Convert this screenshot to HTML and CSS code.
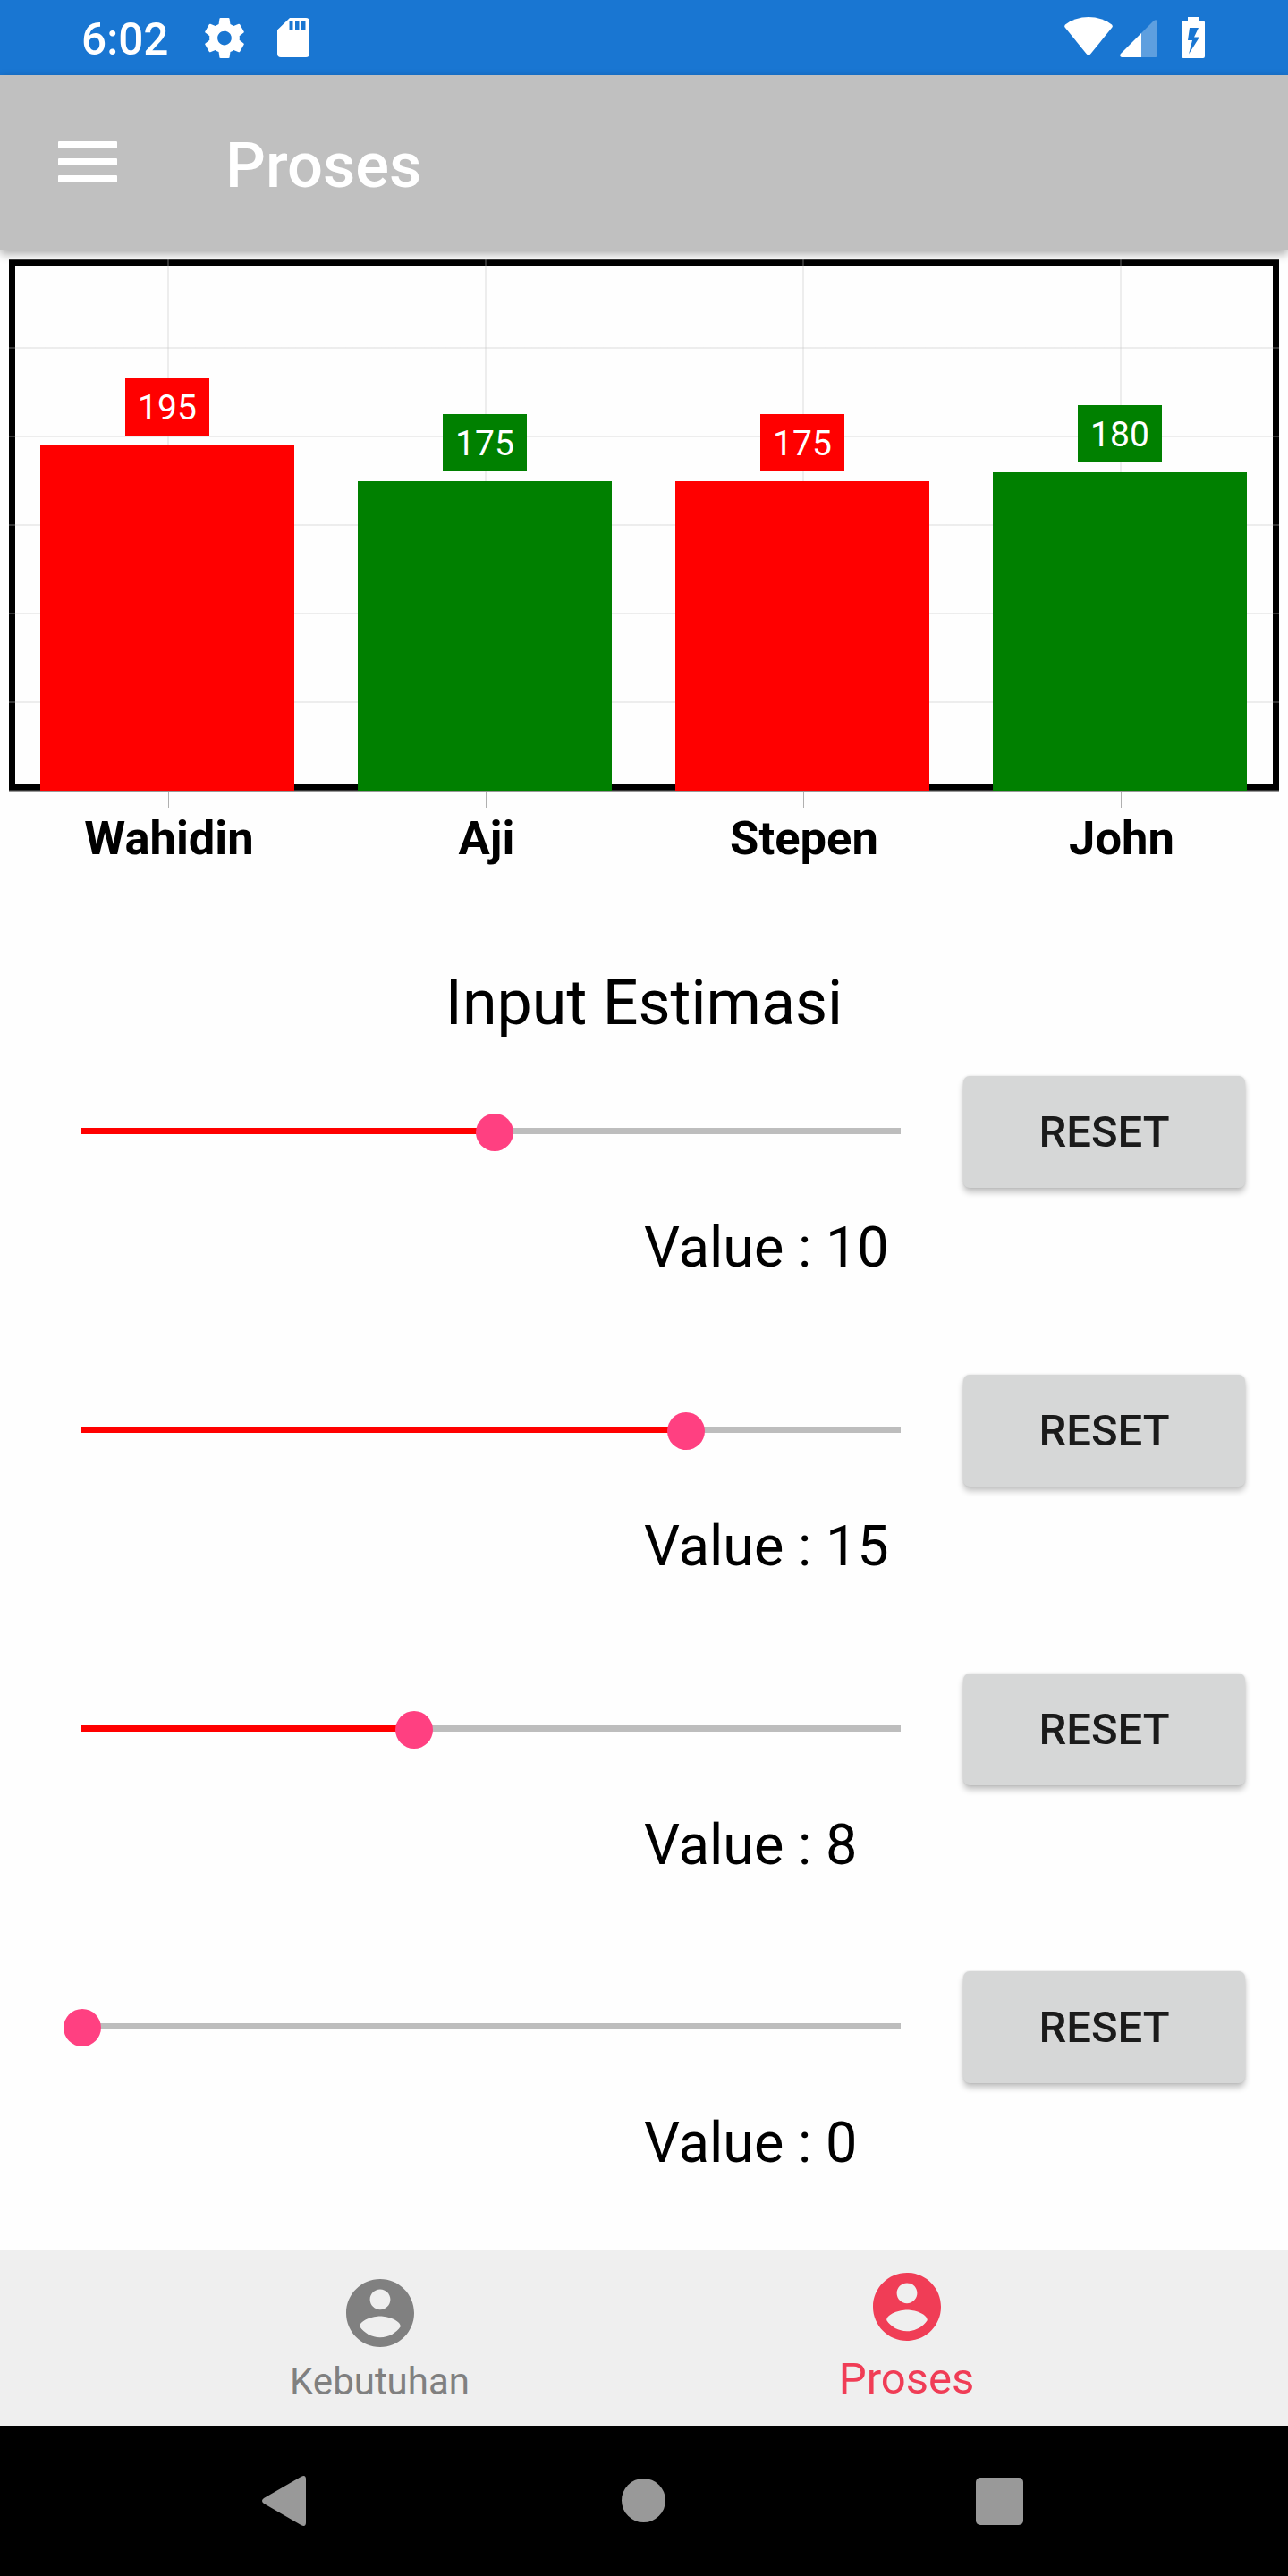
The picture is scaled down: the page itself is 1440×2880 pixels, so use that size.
FILE: index.html
```html
<!DOCTYPE html>
<html lang="id">
<head>
<meta charset="utf-8">
<title>Proses</title>
<link rel="stylesheet" href="styles.css">
</head>
<body>
<div class="screen">
  <header class="status">
    <span class="clock">6:02</span>
    <svg class="gear" viewBox="2.2 2 19.6 20" preserveAspectRatio="none"><path d="M19.43 12.98c.04-.32.07-.64.07-.98s-.03-.66-.07-.98l2.11-1.65c.19-.15.24-.42.12-.64l-2-3.46c-.12-.22-.39-.3-.61-.22l-2.49 1c-.52-.4-1.08-.73-1.69-.98l-.38-2.65C14.46 2.18 14.25 2 14 2h-4c-.25 0-.46.18-.49.42l-.38 2.65c-.61.25-1.17.59-1.69.98l-2.49-1c-.23-.09-.49 0-.61.22l-2 3.46c-.13.22-.07.49.12.64l2.11 1.65c-.04.32-.07.65-.07.98s.03.66.07.98l-2.11 1.65c-.19.15-.24.42-.12.64l2 3.46c.12.22.39.3.61.22l2.49-1c.52.4 1.08.73 1.69.98l.38 2.65c.03.24.24.42.49.42h4c.25 0 .46-.18.49-.42l.38-2.65c.61-.25 1.17-.59 1.69-.98l2.49 1c.23.09.49 0 .61-.22l2-3.46c.12-.22.07-.49-.12-.64l-2.11-1.65zM12 15.5c-1.93 0-3.5-1.57-3.5-3.5s1.57-3.5 3.5-3.5 3.5 1.57 3.5 3.5-1.57 3.5-3.5 3.5z"/></svg>
    <svg class="sd" viewBox="0 0 36 44"><path fill-rule="evenodd" d="M14 0H32Q36 0 36 4V40Q36 44 32 44H4Q0 44 0 40V13.500ZM13.500 4V14H17.500V4ZM20 4V14H24.500V4ZM27 4V14H31.500V4Z"/></svg>
    <span class="fill"></span>
    <svg class="wifi" viewBox="0 0 54 43"><path d="M1 8.500Q12 0 27 0T53 8.500Q54.500 10 53 12L29.500 41Q27 44 24.500 41L1 12Q-.5 10 1 8.500Z"/></svg>
    <svg class="signal" viewBox="0 0 42 42"><path opacity=".3" d="M38 1Q42-1 42 3V40Q42 42 40 42H24V15Z"/><path d="M24 15V42H2Q-1 41 1 38Z"/></svg>
    <svg class="battery" viewBox="0 0 26 46"><path fill-rule="evenodd" d="M7 0H19V4H24Q26 4 26 6V44Q26 46 24 46H2Q0 46 0 44V6Q0 4 2 4H7ZM9 12 7 26H12L8 41.500 20 22.500H14L19 12Z"/></svg>
  </header>

  <header class="appbar">
    <span class="menu"><i></i><i></i><i></i></span>
    <h1>Proses</h1>
  </header>

  <section class="chart">
    <div class="plot">
      <div class="col red"><b>195</b><div class="bar" style="height:386px"></div></div>
      <div class="col green"><b>175</b><div class="bar" style="height:346px"></div></div>
      <div class="col red"><b>175</b><div class="bar" style="height:346px"></div></div>
      <div class="col green"><b>180</b><div class="bar" style="height:356px"></div></div>
    </div>
    <div class="axis"><span>Wahidin</span><span>Aji</span><span>Stepen</span><span>John</span></div>
  </section>

  <main class="inputs">
    <h2>Input Estimasi</h2>
    <div class="row">
      <div class="slider"><div class="done" style="width:461.5px"></div><div class="knob"></div></div>
      <button class="reset">RESET</button>
      <p class="value">Value : 10</p>
    </div>
    <div class="row">
      <div class="slider"><div class="done" style="width:675.5px"></div><div class="knob"></div></div>
      <button class="reset">RESET</button>
      <p class="value">Value : 15</p>
    </div>
    <div class="row short">
      <div class="slider"><div class="done" style="width:371.5px"></div><div class="knob"></div></div>
      <button class="reset">RESET</button>
      <p class="value">Value : 8</p>
    </div>
    <div class="row">
      <div class="slider"><div class="done" style="width:0.5px"></div><div class="knob"></div></div>
      <button class="reset">RESET</button>
      <p class="value">Value : 0</p>
    </div>
  </main>

  <nav class="tabs">
    <a class="tab">
      <svg viewBox="2 2 20 20"><path d="M12 2C6.480 2 2 6.480 2 12s4.480 10 10 10 10-4.480 10-10S17.520 2 12 2zm0 3c1.660 0 3 1.340 3 3s-1.340 3-3 3-3-1.340-3-3 1.340-3 3-3zm0 14.200c-2.500 0-4.710-1.280-6-3.220.03-1.990 4-3.080 6-3.080 1.990 0 5.970 1.090 6 3.080-1.290 1.940-3.500 3.220-6 3.220z"/></svg>
      <span>Kebutuhan</span>
    </a>
    <a class="tab active">
      <svg viewBox="2 2 20 20"><path d="M12 2C6.480 2 2 6.480 2 12s4.480 10 10 10 10-4.480 10-10S17.520 2 12 2zm0 3c1.660 0 3 1.340 3 3s-1.340 3-3 3-3-1.340-3-3 1.340-3 3-3zm0 14.200c-2.500 0-4.710-1.280-6-3.220.03-1.990 4-3.080 6-3.080 1.990 0 5.970 1.090 6 3.080-1.290 1.940-3.500 3.220-6 3.220z"/></svg>
      <span>Proses</span>
    </a>
  </nav>

  <footer class="sysnav">
    <svg class="back" viewBox="0 0 49 56"><path d="M43.500 1Q49-2 49 4V52Q49 58 43.500 55L2 31Q-2 28 2 25Z"/></svg>
    <span class="home"></span>
    <span class="recent"></span>
  </footer>
</div>
</body>
</html>
```
FILE: styles.css
```css
* { box-sizing: border-box; }
body { margin: 0; background: #fefefe; font-family: Roboto, "Liberation Sans", sans-serif; color: #000; }
h1, h2, p { margin: 0; }
svg { display: block; flex: none; }
.screen { width: 1440px; height: 2880px; display: flex; flex-direction: column; overflow: hidden; }

.status { height: 84px; background: #1976d2; display: flex; align-items: flex-start; padding: 19px 93px 0 91px; flex: none; }
.status svg { fill: #fff; }
.clock { width: 138px; font-size: 49.5px; line-height: 50px; font-weight: 500; color: #fff; }
.gear { width: 44px; height: 45px; margin-top: 1px; }
.sd { width: 36px; height: 44px; margin: 1px 0 0 37px; }
.fill { flex: 1; }
.wifi { width: 54px; height: 43px; }
.signal { width: 42px; height: 42px; margin: 3px 0 0 8px; }
.battery { width: 26px; height: 46px; margin-left: 27px; }

.appbar { height: 196px; background: #c0c0c0; display: flex; align-items: center; padding-left: 65px; flex: none; box-shadow: 0 4px 10px rgba(0,0,0,.33); }
.menu { width: 66px; display: flex; flex-direction: column; gap: 11px; margin: -3px 121px 0 0; }
.menu i { height: 8px; background: #fff; border-radius: 1px; }
h1 { font-size: 70.5px; line-height: 82px; font-weight: 500; color: #fff; margin-top: 6px; }

.chart { padding: 10px 10px 0; height: 785px; flex: none; }
.plot { height: 596px; border-bottom: 2px solid #979797; box-shadow: inset 0 0 0 7px #000; position: relative; display: grid; grid-template-columns: repeat(4, 355px); align-items: end; }
/* grid lines, drawn over the frame and under the bars */
.plot::before { content: ""; position: absolute; inset: 0;
  background:
    linear-gradient(rgba(192,192,192,.27) 2px, transparent 2px) 0 -1px / 100% 99px,
    linear-gradient(90deg, transparent 177px, rgba(192,192,192,.27) 177px 179px, transparent 179px) 0 0 / 355px 100%; }
.col { display: flex; flex-direction: column; align-items: center; position: relative; padding-right: 1px; }
.bar { width: 284px; background: currentColor; }
.col b { width: 94px; height: 64px; background: currentColor; margin-bottom: 11px; text-align: center; font-weight: 400; font-size: 39px; line-height: 66px; }
.col b::first-line { color: #fff; }
.red { color: #f00; }
.green { color: #008000; }
.axis { display: grid; grid-template-columns: repeat(4, 355px); text-align: center; font-size: 52.5px; line-height: 62px; font-weight: 700; }
.axis span { padding-left: 3px; }
.axis span::before { content: ""; display: block; width: 1px; height: 17px; background: #b0b0b0; margin: 0 0 3px 175px; }

.inputs { height: 1451px; flex: none; padding-top: 15px; }
h2 { text-align: center; font-size: 70px; line-height: 82px; font-weight: 400; }
.row { display: grid; grid-template-columns: 916px 315px; column-gap: 70px; padding-left: 91px; grid-template-rows: 125px 209px; align-items: start; }
.row.short { grid-template-rows: 125px 208px; }
h2 + .row { margin-top: 41px; }
.slider { height: 42px; margin-top: 41px; display: flex; align-items: center; background: linear-gradient(#bdbdbd, #bdbdbd) 0 17px / 100% 7px no-repeat; }
.done { height: 7px; background: #f00; margin-top: -1px; }
.knob { width: 42px; height: 42px; border-radius: 50%; background: #ff4081; margin: 1px 0 0 -21px; flex: none; }
.reset { height: 125px; border: 0; padding: 1px 0 0; border-radius: 7px; background: #d6d7d7; color: #1b1b1b; font: 500 49px/124px Roboto, "Liberation Sans", sans-serif; box-shadow: 0 5px 7px rgba(0,0,0,.24), 0 0 3px rgba(0,0,0,.12); }
.value { grid-column: 1 / -1; margin: 30px 0 0 629px; font-size: 63px; line-height: 74px; }

.tabs { height: 196px; flex: none; background: #efefef; display: flex; padding-left: 130px; }
.tab { width: 589px; display: flex; flex-direction: column; align-items: center; color: #808080; font-size: 42px; line-height: 50px; padding-top: 32px; }
.tab svg { width: 76px; height: 76px; fill: currentColor; }
.tab span { margin-top: 14px; }
.active { color: #f03d56; font-size: 49px; line-height: 58px; padding-top: 25px; }

.sysnav { height: 168px; flex: none; background: #000; display: flex; align-items: center; padding-left: 293px; }
.back { width: 49px; height: 56px; fill: #999; }
.home { width: 49px; height: 49px; border-radius: 50%; background: #999; margin: -1px 0 0 353px; }
.recent { width: 53px; height: 53px; border-radius: 5px; background: #999; margin-left: 347px; }
```
